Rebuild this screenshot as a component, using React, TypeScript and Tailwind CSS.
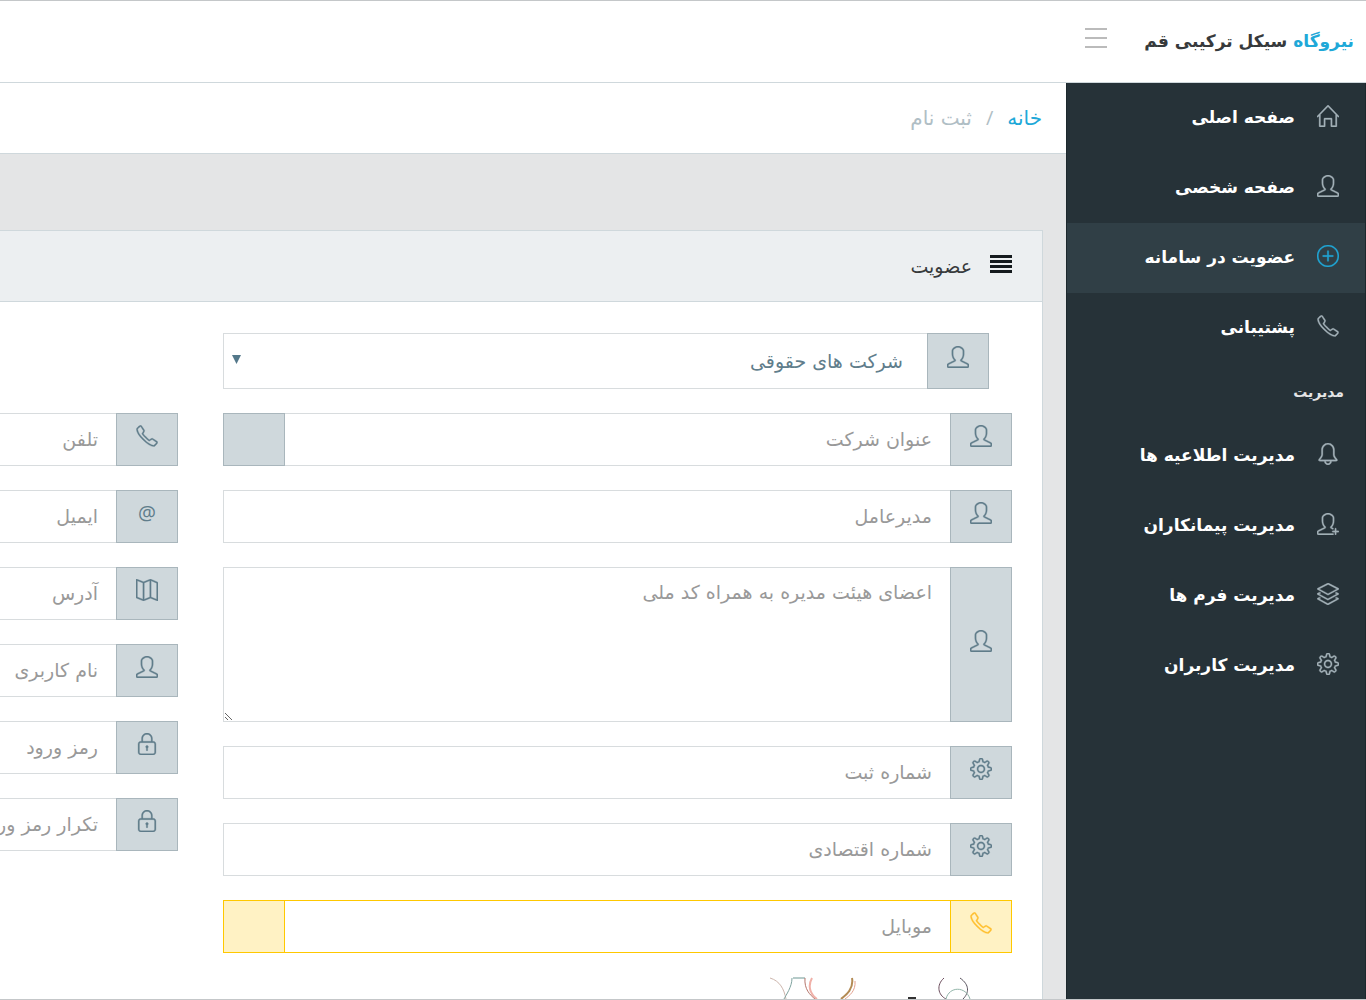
import type { ComponentType } from 'react';
import clsx from 'clsx';
import {
  SlBell,
  SlHome,
  SlLayers,
  SlLock,
  SlMap,
  SlPhone,
  SlPlus,
  SlSettings,
  SlUser,
  SlUserFollow,
} from 'react-icons/sl';

type Icon = ComponentType<{ className?: string }>;

type NavEntry = { label: string; icon: Icon; active?: boolean };

const mainNav: NavEntry[] = [
  { label: 'صفحه اصلی', icon: SlHome },
  { label: 'صفحه شخصی', icon: SlUser },
  { label: 'عضویت در سامانه', icon: SlPlus, active: true },
  { label: 'پشتیبانی', icon: SlPhone },
];

const adminNav: NavEntry[] = [
  { label: 'مدیریت اطلاعیه ها', icon: SlBell },
  { label: 'مدیریت پیمانکاران', icon: SlUserFollow },
  { label: 'مدیریت فرم ها', icon: SlLayers },
  { label: 'مدیریت کاربران', icon: SlSettings },
];

function AtSign() {
  return <span className="font-['Open_Sans',sans-serif] text-[20px] leading-[22px]">@</span>;
}

function NavItem({ label, icon: Icon, active }: NavEntry) {
  return (
    <li>
      <a
        href="#"
        className={clsx(
          'flex h-[70px] items-center gap-[22px] pr-[26px] text-[17px] font-bold text-white',
          active && 'bg-[#303f46]'
        )}
      >
        <Icon
          className={clsx(
            'mb-1 size-[22px] shrink-0 [stroke-width:14px]',
            active ? 'text-[#20a8d8]' : 'text-[#a3b1b8]'
          )}
        />
        {label}
      </a>
    </li>
  );
}

type FieldProps = {
  id: string;
  label: string;
  icon: Icon;
  type?: string;
  trailing?: boolean;
  bleed?: boolean;
  warning?: boolean;
};

function Field({ id, label, icon: Icon, type = 'text', trailing, bleed, warning }: FieldProps) {
  const addon = warning
    ? 'border-[#ffc800] bg-[#fff2c4] text-[#ffc030]'
    : 'border-[#a9b6bc] bg-[#cfd8dc] text-[#607d8b]';

  return (
    <div className="flex h-[53px]">
      <label
        htmlFor={id}
        aria-label={label}
        className={clsx('flex w-[62px] shrink-0 items-center justify-center border pb-2', addon)}
      >
        <Icon className="size-[22px] [stroke-width:14px]" />
      </label>
      <input
        id={id}
        type={type}
        placeholder={label}
        className={clsx(
          'min-w-0 flex-1 border-y bg-white pr-[18px] text-[19px] text-[#607d8b] outline-none placeholder:overflow-visible placeholder:text-[#999]',
          !bleed && !trailing && 'border-l',
          warning ? 'border-[#ffc800]' : 'border-[#d8dcde]'
        )}
      />
      {trailing && <span className={clsx('w-[62px] shrink-0 border', addon)} />}
    </div>
  );
}

function Captcha() {
  return (
    <svg className="mr-10 h-[22px] w-[210px]" viewBox="0 0 210 22" fill="none" role="img" aria-label="captcha">
      <path d="M8 1 C18 4 22 12 24 22" stroke="#cdb5ac" />
      <path d="M30 1 C30 10 24 18 22 22" stroke="#7fa39f" />
      <path d="M31 1 H43" stroke="#6c9793" />
      <path d="M43 1 C42 12 48 18 53 22" stroke="#b5746a" />
      <path d="M50 1 C45 10 49 18 55 22" stroke="#f0b0a8" strokeWidth="2" />
      <path d="M90 1 C92 12 84 18 79 22" stroke="#b38b55" strokeWidth="2" />
      <path d="M93 4 C94 14 87 19 83 22" stroke="#e3a18f" />
      <path d="M146 21 H154" stroke="#333" strokeWidth="2" />
      <path d="M182 1 C174 8 176 18 184 22" stroke="#6b4c5c" />
      <path d="M198 1 C208 8 207 16 201 22" stroke="#5a5560" />
      <path d="M184 22 C187 9 204 9 208 22" stroke="#91b5a9" />
    </svg>
  );
}

export default function App() {
  return (
    <div
      dir="rtl"
      className="flex min-h-screen flex-col overflow-hidden border-y border-[#c4c7c9] bg-[#e4e5e6] font-['DejaVu_Sans',sans-serif]"
    >
      <header className="flex h-[82px] items-center border-b border-[#cfd8dc] bg-white pr-3">
        <a href="#" className="w-[210px] text-[17px] font-bold whitespace-nowrap text-[#373a3c]">
          <span className="text-[#20a8d8]">نیروگاه</span> سیکل ترکیبی قم
        </a>
        <button type="button" aria-label="menu" className="mr-[37px] mb-2 flex w-[22px] flex-col gap-[7px]">
          <span className="h-[2px] bg-[#bbb]" />
          <span className="h-[2px] bg-[#bbb]" />
          <span className="h-[2px] bg-[#bbb]" />
        </button>
      </header>

      <div className="flex flex-1">
        <aside className="w-[300px] shrink-0 border-x border-[#1c282d] bg-[#263238]">
          <nav>
            <ul>
              {mainNav.map((item) => (
                <NavItem key={item.label} {...item} />
              ))}
            </ul>
            <h2 className="flex h-[58px] items-center pr-[21px] text-[14px] font-bold text-[#e4e5e6]">مدیریت</h2>
            <ul>
              {adminNav.map((item) => (
                <NavItem key={item.label} {...item} />
              ))}
            </ul>
          </nav>
        </aside>

        <main className="flex min-w-0 flex-1 flex-col">
          <ol className="flex h-[71px] items-center border-b border-[#cfd8dc] bg-white pr-6 text-[20px] text-[#b0bec5]">
            <li>
              <a href="#" className="text-[#20a8d8]">
                خانه
              </a>
            </li>
            <li className="px-[14px] font-['Open_Sans',sans-serif]">/</li>
            <li>ثبت نام</li>
          </ol>

          {/* Registration card */}
          <section className="mt-[76px] mr-[23px] flex-1 border-t border-r border-[#cfd8dc] bg-white">
            <div className="flex h-[71px] items-center gap-[18px] border-b border-[#cfd8dc] bg-[#eceff1] pr-[30px] text-[19px] text-[#373a3c]">
              <span className="mb-1 flex w-[22px] flex-col gap-[2px]">
                <span className="h-[3px] bg-[#151b1e]" />
                <span className="h-[3px] bg-[#151b1e]" />
                <span className="h-[3px] bg-[#151b1e]" />
                <span className="h-[3px] bg-[#151b1e]" />
              </span>
              عضویت
            </div>

            <form className="flex gap-[45px] pt-[31px] pr-[30px]">
              <div className="flex min-w-0 flex-1 flex-col gap-6">
                <div className="mr-[23px] flex h-14">
                  <label
                    htmlFor="kind"
                    aria-label="نوع عضویت"
                    className="flex w-[62px] shrink-0 items-center justify-center border border-[#a9b6bc] bg-[#cfd8dc] pb-2 text-[#607d8b]"
                  >
                    <SlUser className="size-[22px] [stroke-width:14px]" />
                  </label>
                  <div className="relative flex-1">
                    <select
                      id="kind"
                      className="size-full appearance-none border-y border-l border-[#d8dcde] bg-white pr-6 text-[19px] leading-[36px] text-[#607d8b] outline-none"
                    >
                      <option>شرکت های حقوقی</option>
                    </select>
                    <svg className="pointer-events-none absolute top-[22px] left-[9px] h-[9px] w-[9px]" viewBox="0 0 9 9">
                      <path d="M0 0 H9 L4.5 9 Z" fill="#54788a" />
                    </svg>
                  </div>
                </div>
                <Field id="company" label="عنوان شرکت" icon={SlUser} trailing />
                <Field id="ceo" label="مدیرعامل" icon={SlUser} />
                <div className="flex h-[155px]">
                  <label
                    htmlFor="board"
                    aria-label="اعضای هیئت مدیره"
                    className="flex w-[62px] shrink-0 items-center justify-center border border-[#a9b6bc] bg-[#cfd8dc] pb-2 text-[#607d8b]"
                  >
                    <SlUser className="size-[22px] [stroke-width:14px]" />
                  </label>
                  <textarea
                    id="board"
                    placeholder="اعضای هیئت مدیره به همراه کد ملی"
                    className="min-w-0 flex-1 border-y border-l border-[#d8dcde] bg-white pt-[6px] pr-[18px] text-[19px] leading-[36px] text-[#607d8b] outline-none placeholder:text-[#999]"
                  />
                </div>
                <Field id="regno" label="شماره ثبت" icon={SlSettings} />
                <Field id="econo" label="شماره اقتصادی" icon={SlSettings} />
                <Field id="mobile" label="موبایل" icon={SlPhone} trailing warning />
                <Captcha />
              </div>

              <div className="flex w-[178px] shrink-0 flex-col gap-6 pt-20">
                <Field id="tel" label="تلفن" icon={SlPhone} bleed />
                <Field id="email" label="ایمیل" icon={AtSign} type="email" bleed />
                <Field id="address" label="آدرس" icon={SlMap} bleed />
                <Field id="username" label="نام کاربری" icon={SlUser} bleed />
                <Field id="password" label="رمز ورود" icon={SlLock} type="password" bleed />
                <Field id="password2" label="تکرار رمز ورود" icon={SlLock} type="password" bleed />
              </div>
            </form>
          </section>
        </main>
      </div>
    </div>
  );
}
